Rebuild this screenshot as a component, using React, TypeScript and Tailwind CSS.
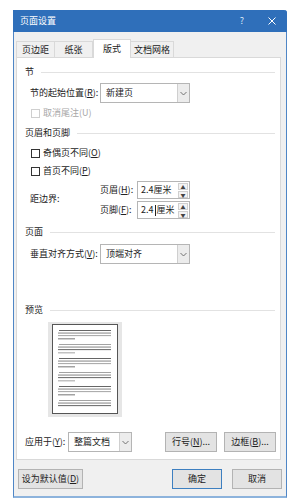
import React from "react";

const font = { fontFamily: '"Noto Sans CJK SC", "Noto Sans", sans-serif' };

function Chevron() {
  return (
    <svg width="7" height="5" viewBox="0 0 7 5">
      <path d="M0.5 1 L3.5 4 L6.5 1" fill="none" stroke="#666" strokeWidth="0.9" />
    </svg>
  );
}

function Select({ value, width }: { value: string; width: string }) {
  return (
    <div className={`flex h-[20px] ${width} border border-[#b5b5b5] bg-white`}>
      <div className="flex-1 flex items-center pl-[5px] text-[9px] text-[#222]">{value}</div>
      <div className="w-[12px] flex items-center justify-center bg-[#ececec] border-l border-[#cfcfcf]">
        <Chevron />
      </div>
    </div>
  );
}

function Spin({ value, caret }: { value: string; caret?: boolean }) {
  return (
    <div className="flex h-[18px] w-[53px] border border-[#b5b5b5] bg-white">
      <div className="flex-1 flex items-center pl-[3px] text-[9px] text-[#222]">
        {caret ? (
          <>
            2.4<span className="inline-block w-px h-[11px] bg-[#222] mx-[1px]" />厘米
          </>
        ) : (
          value
        )}
      </div>
      <div className="w-[11px] flex flex-col justify-center gap-px pr-[1px] py-[1px]">
        <div className="flex-1 flex items-center justify-center border border-[#cfcfcf] bg-[#f3f3f3] text-[5px] leading-none text-[#444]">▲</div>
        <div className="flex-1 flex items-center justify-center border border-[#cfcfcf] bg-[#f3f3f3] text-[5px] leading-none text-[#444]">▼</div>
      </div>
    </div>
  );
}

function Header({ text }: { text: string }) {
  return (
    <div className="flex items-center h-[14px] pr-[5px]">
      <span className="text-[9px] text-[#222]">{text}</span>
      <div className="flex-1 h-px bg-[#e2e2e2] ml-[7px]" />
    </div>
  );
}

function Check({ label, disabled }: { label: React.ReactNode; disabled?: boolean }) {
  return (
    <div className="flex items-center h-[14px] pl-[6px]">
      <div className={`w-[9px] h-[9px] border ${disabled ? "border-[#cfcfcf]" : "border-[#333]"} bg-white`} />
      <span className={`ml-[3px] text-[9px] ${disabled ? "text-[#a8a8a8]" : "text-[#222]"}`}>{label}</span>
    </div>
  );
}

function Btn({ children, width, primary }: { children: React.ReactNode; width: string; primary?: boolean }) {
  return (
    <div
      className={`h-[20px] ${width} flex items-center justify-center text-[9px] text-[#222] bg-[#e3e3e3] border ${
        primary ? "border-[#3d7fc0]" : "border-[#b3b3b3]"
      }`}
    >
      {children}
    </div>
  );
}

function Preview() {
  const groups = [0, 14, 28, 42, 56, 70];
  return (
    <div className="w-[74px] h-[95px] bg-[#e6e6e6] pt-[2px] pl-[4px]">
      <div className="w-[66px] h-[90px] bg-white border border-[#555]">
        <svg width="64" height="88" viewBox="0 0 64 88">
          {groups.map((g, i) => (
            <g key={g}>
              <rect x="6" y={5 + g} width="52" height="0.9" fill={i % 2 ? "#999" : "#555"} />
              <rect x="5" y={7.6 + g} width="53" height="0.9" fill="#777" />
              <rect x="5" y={10.2 + g} width="53" height="0.9" fill={i % 2 ? "#555" : "#999"} />
              {i < 5 && <rect x="5" y={13.4 + g} width="17" height="0.9" fill={i % 2 ? "#999" : "#666"} />}
            </g>
          ))}
        </svg>
      </div>
    </div>
  );
}

export default function App() {
  return (
    <div className="w-[308px] h-[503px] bg-white pt-[10px] pl-[13px]" style={font}>
      <div className="w-[274px] h-[488px] flex flex-col bg-[#f0f0f0] border-x border-[#4f86c6] border-b-2 border-b-[#8db3dc] rounded-tr-[3px]">
        {/* title bar */}
        <div className="h-[22px] -mx-px bg-[#2f6fba] flex items-center pl-[7px] pr-[11px] rounded-tr-[3px]">
          <span className="text-[9px] text-white">页面设置</span>
          <span className="ml-auto text-[9px] text-[#dce8f6]">?</span>
          <svg className="ml-[24px]" width="8" height="8" viewBox="0 0 8 8">
            <path d="M0.5 0.5 L7.5 7.5 M7.5 0.5 L0.5 7.5" stroke="#fff" strokeWidth="1" />
          </svg>
        </div>

        <div className="pl-[2px] pr-[5px] flex flex-col">
          {/* tabs */}
          <div className="flex items-end h-[25px] text-[9px] text-[#222]">
            <div className="w-[39px] h-[16px] flex items-center justify-center border border-b-0 border-[#d9d9d9] bg-[#f0f0f0]">页边距</div>
            <div className="w-[38px] h-[16px] flex items-center justify-center border-t border-r border-[#d9d9d9] bg-[#f0f0f0]">纸张</div>
            <div className="w-[38px] h-[19px] -mb-px relative flex items-center justify-center border border-b-0 border-[#d9d9d9] bg-white">版式</div>
            <div className="w-[43px] h-[16px] flex items-center justify-center border-t border-r border-[#d9d9d9] bg-[#f0f0f0]">文档网格</div>
          </div>

          {/* panel */}
          <div className="h-[403px] bg-white border border-[#d9d9d9] pl-[8px] flex flex-col">
            <div className="mt-[7px]">
              <Header text="节" />
            </div>
            <div className="mt-[4px] flex items-center pl-[5px]">
              <span className="text-[9px] text-[#222] w-[70px]">
                节的起始位置(<u>R</u>):
              </span>
              <Select value="新建页" width="w-[90px]" />
            </div>
            <div className="mt-[3px]">
              <Check label="取消尾注(U)" disabled />
            </div>

            <div className="mt-[6px]">
              <Header text="页眉和页脚" />
            </div>
            <div className="mt-[6px]">
              <Check label={<>奇偶页不同(<u>O</u>)</>} />
            </div>
            <div className="mt-[4px]">
              <Check label={<>首页不同(<u>P</u>)</>} />
            </div>
            <div className="mt-[3px] flex items-center pl-[5px] h-[38px]">
              <span className="text-[9px] text-[#222] w-[70px] mt-[-2px]">距边界:</span>
              <div className="flex flex-col gap-[2px]">
                <div className="flex items-center">
                  <span className="text-[9px] text-[#222] w-[37px]">
                    页眉(<u>H</u>):
                  </span>
                  <Spin value="2.4厘米" />
                </div>
                <div className="flex items-center">
                  <span className="text-[9px] text-[#222] w-[37px]">
                    页脚(<u>F</u>):
                  </span>
                  <Spin value="2.4 厘米" caret />
                </div>
              </div>
            </div>

            <div className="mt-[6px]">
              <Header text="页面" />
            </div>
            <div className="mt-[5px] flex items-center pl-[5px]">
              <span className="text-[9px] text-[#222] w-[70px]">
                垂直对齐方式(<u>V</u>):
              </span>
              <Select value="顶端对齐" width="w-[90px]" />
            </div>

            <div className="mt-[39px]">
              <Header text="预览" />
            </div>
            <div className="mt-[5px] pl-[23px]">
              <Preview />
            </div>

            <div className="mt-[15px] flex items-center pr-[4px]">
              <span className="text-[9px] text-[#222] w-[43px]">
                应用于(<u>Y</u>):
              </span>
              <Select value="整篇文档" width="w-[64px]" />
              <div className="ml-auto flex gap-[7px]">
                <Btn width="w-[52px]">
                  行号(<u>N</u>)...
                </Btn>
                <Btn width="w-[52px]">
                  边框(<u>B</u>)...
                </Btn>
              </div>
            </div>
          </div>

          {/* bottom buttons */}
          <div className="mt-[9px] flex items-center pl-[2px] pr-[-1px]">
            <Btn width="w-[65px]">
              设为默认值(<u>D</u>)
            </Btn>
            <div className="ml-auto flex gap-[10px] mr-[-1px]">
              <Btn width="w-[50px]" primary>
                确定
              </Btn>
              <Btn width="w-[50px]">取消</Btn>
            </div>
          </div>
        </div>
      </div>
    </div>
  );
}
